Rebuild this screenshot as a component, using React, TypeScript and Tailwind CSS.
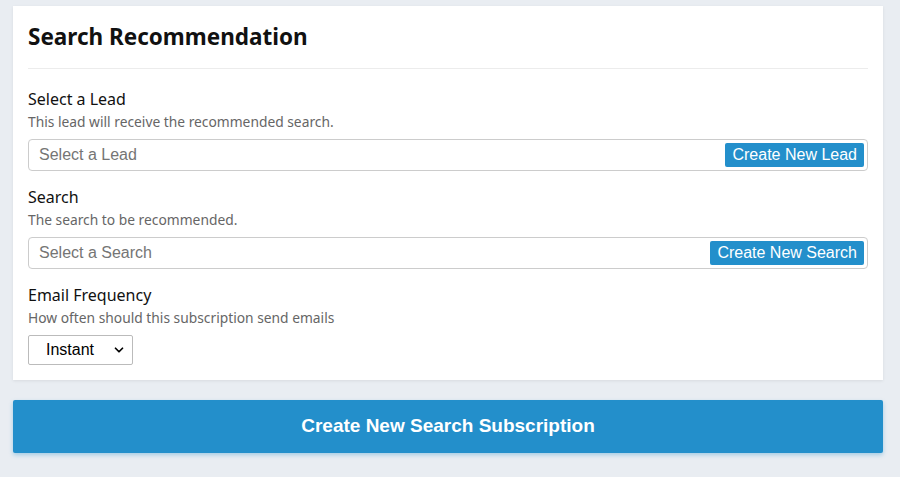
import { ChevronDown } from "lucide-react";

const LABEL_FONT = { fontFamily: "'Noto Sans', Lato, sans-serif" };

function Field({
  label,
  help,
  children,
}: {
  label: string;
  help: string;
  children: React.ReactNode;
}) {
  return (
    <div className="flex flex-col">
      <p className="text-[16px] leading-[20px] text-[#111]">{label}</p>
      <p className="mt-[4px] text-[13.8px] leading-[18px] text-[#666]">{help}</p>
      <div className="mt-[8px]">{children}</div>
    </div>
  );
}

function PickerInput({ placeholder, action }: { placeholder: string; action: string }) {
  return (
    <div
      className="flex h-[32px] items-center justify-between rounded-[4px] border border-[#ccc] bg-white pl-[10px] pr-[3px]"
      style={{ fontFamily: "'Liberation Sans', Arial, sans-serif" }}
    >
      <span className="text-[16px] text-[#757575]">{placeholder}</span>
      <button className="h-[24px] rounded-[2px] bg-[#238fcb] px-[7px] text-[16px] leading-[24px] text-white">
        {action}
      </button>
    </div>
  );
}

export default function App() {
  return (
    <div className="min-h-[477px] w-[900px] bg-[#e9edf2] pl-[13px] pt-[6px]" style={LABEL_FONT}>
      <div className="w-[870px] bg-white px-[15px] pb-[15px] pt-[15px] shadow-[0_1px_3px_rgba(0,0,0,0.08)]">
        <h1 className="text-[22.5px] font-bold leading-[32px] text-[#111]">Search Recommendation</h1>
        <div className="mt-[15px] border-t border-[#ececec]" />
        <div className="mt-[20px] flex flex-col gap-[16px]">
          <Field label="Select a Lead" help="This lead will receive the recommended search.">
            <PickerInput placeholder="Select a Lead" action="Create New Lead" />
          </Field>
          <Field label="Search" help="The search to be recommended.">
            <PickerInput placeholder="Select a Search" action="Create New Search" />
          </Field>
          <Field label="Email Frequency" help="How often should this subscription send emails">
            <div
              className="flex h-[30px] w-[105px] items-center justify-between rounded-[2px] border border-[#bbb] bg-white pl-[17px] pr-[6px] text-[16px] text-black"
              style={{ fontFamily: "'Liberation Sans', Arial, sans-serif" }}
            >
              <span>Instant</span>
              <ChevronDown className="h-[14px] w-[14px]" strokeWidth={3} />
            </div>
          </Field>
        </div>
      </div>
      <button
        className="mt-[20px] h-[53px] w-[870px] rounded-[2px] bg-[#238fcb] text-[19px] font-bold text-white shadow-[0_2px_4px_rgba(35,143,203,0.35)]"
        style={{ fontFamily: "'Liberation Sans', Arial, sans-serif" }}
      >
        Create New Search Subscription
      </button>
    </div>
  );
}
